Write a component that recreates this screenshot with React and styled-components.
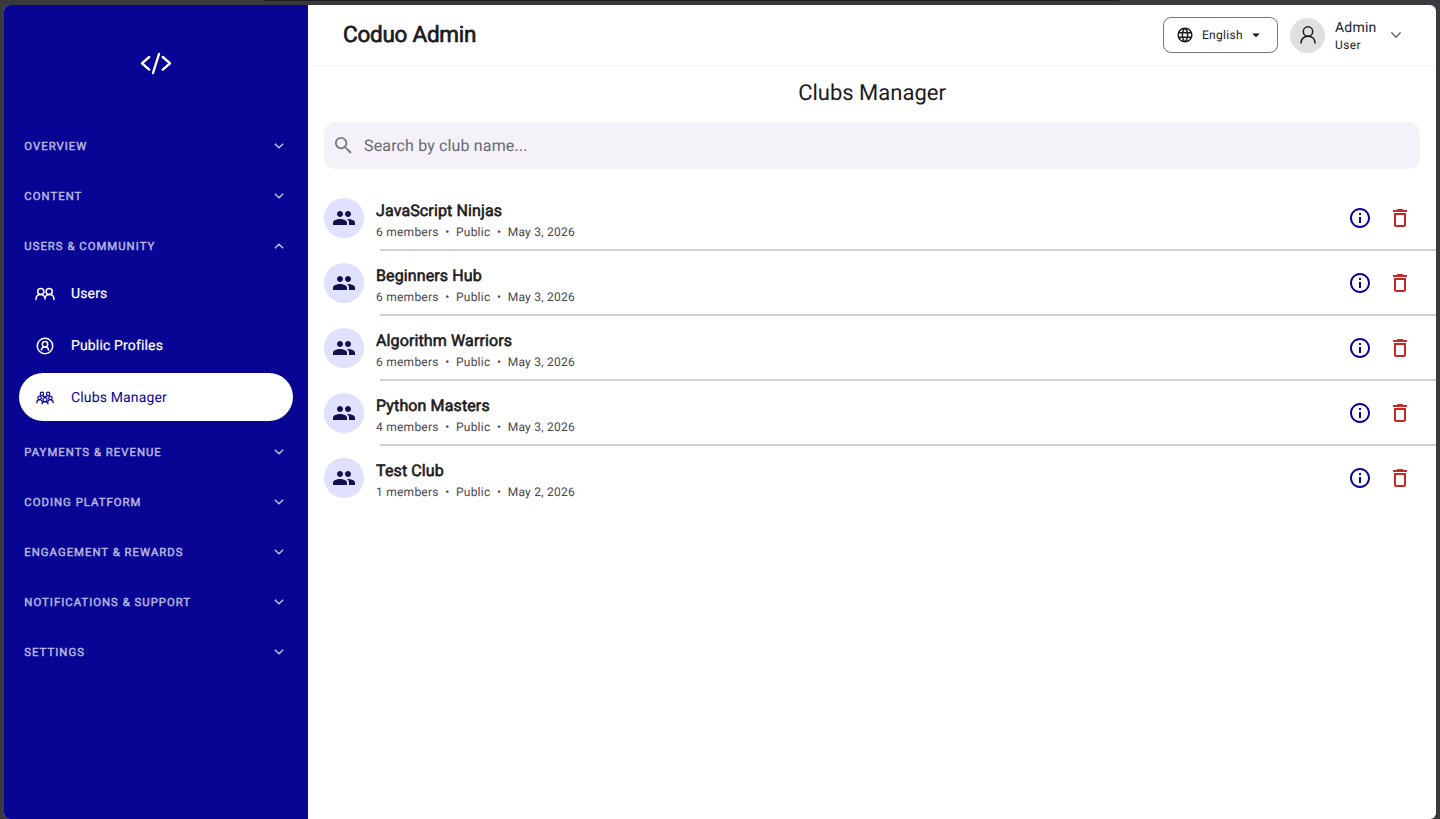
import { useState } from "react";
import styled, { createGlobalStyle } from "styled-components";
import { MdArrowDropDown, MdDeleteOutline, MdInfoOutline, MdLanguage, MdPeople, MdSearch } from "react-icons/md";

const GlobalStyle = createGlobalStyle`
  * {
    box-sizing: border-box;
  }
  body {
    margin: 0;
    background: #3a393d;
    font-family: Roboto, sans-serif;
    color: #1b1b1f;
    text-rendering: geometricPrecision;
  }
  button, input {
    font-family: inherit;
    text-rendering: inherit;
  }
`;

const TopEdge = styled.div`
  height: 5px;
  padding-left: 264px;

  &::before {
    content: "";
    display: block;
    width: 855px;
    height: 1px;
    background: #1f1e22;
  }
`;

const Frame = styled.div`
  display: flex;
  height: 814px;
  margin: 0 4px;
  border-radius: 6px;
  overflow: hidden;
  background: #fff;
`;

const Sidebar = styled.aside`
  width: 304px;
  flex-shrink: 0;
  background: #080595;
`;

const Logo = styled.div`
  display: flex;
  justify-content: center;
  align-items: center;
  height: 116px;
`;

const Group = styled.div`
  display: flex;
  align-items: center;
  justify-content: space-between;
  height: 50px;
  padding: 0 23px 0 20.3px;
  font-size: 11.3px;
  letter-spacing: 1.03px;
  -webkit-text-stroke: 0.45px #b9b8e4;
  color: #b9b8e4;
  white-space: nowrap;
  cursor: pointer;
`;

const GroupItems = styled.div`
  display: flex;
  flex-direction: column;
  gap: 4px;
  padding: 0 15px 6px;
  margin-top: -2px;
`;

const NavItem = styled.div`
  display: flex;
  align-items: center;
  gap: 16px;
  height: 48px;
  padding: 1px 0 0 16px;
  border-radius: 24px;
  font-size: 14px;
  letter-spacing: 0.15px;
  cursor: pointer;
  ${props => props.$active ? `
  background: #fff;
  color: #080595;
  ` : `
  color: #fff;
  -webkit-text-stroke: 0.2px #fff;
  `}
`;

const Main = styled.main`
  flex: 1;
  min-width: 0;
`;

const Header = styled.header`
  display: flex;
  align-items: center;
  height: 61px;
  padding: 0 34px 0 35px;
  border-bottom: 1px solid #f3f3f4;
`;

const Brand = styled.div`
  flex: 1;
  font-size: 22.5px;
  line-height: 30px;
  letter-spacing: -0.25px;
  -webkit-text-stroke: 0.7px #1b1b1f;
`;

const LanguageButton = styled.button`
  display: flex;
  align-items: center;
  width: 115px;
  height: 36px;
  padding: 0 12px 0 12px;
  border: 1px solid #77767f;
  border-radius: 8px;
  background: #fff;
  color: #1b1b1f;
  font-size: 12px;
  letter-spacing: 0.3px;

  span {
    margin: 0 4px 0 8px;
  }
`;

const UserAvatar = styled.div`
  display: flex;
  align-items: center;
  justify-content: center;
  width: 35px;
  height: 35px;
  margin: 0 10px 0 12px;
  border-radius: 50%;
  background: #e0e0e0;
`;

const UserName = styled.div`
  width: 55px;
  padding-top: 3px;
  font-size: 14px;
  line-height: 18px;
  letter-spacing: 0.2px;
`;

const UserRole = styled.div`
  font-size: 12px;
  line-height: 17px;
  letter-spacing: 0.35px;
`;

const PageTitle = styled.h1`
  margin: 0;
  padding: 13px 0 13px;
  font-size: 22px;
  font-weight: 400;
  line-height: 30px;
  text-align: center;
`;

const SearchBar = styled.label`
  display: flex;
  align-items: center;
  gap: 9px;
  height: 47px;
  margin: 0 16px;
  padding: 0 8px;
  border-radius: 12px;
  background: #f4f1f9;
  color: #7c7a82;
`;

const SearchInput = styled.input`
  flex: 1;
  padding: 0;
  border: 0;
  outline: 0;
  background: transparent;
  font-size: 16px;
  letter-spacing: 0.15px;

  &::placeholder {
    color: #69676f;
    opacity: 1;
  }
`;

const ClubList = styled.div`
  padding-top: 17px;
`;

const ClubRow = styled.div`
  display: flex;
  align-items: center;
  height: 65px;
  padding: 0 24px 2px 16px;
  background: ${props => props.$last ? "none" : "linear-gradient(#d1d1d3, #d1d1d3) 72px 100% / 100% 2px no-repeat"};
`;

const ClubAvatar = styled.div`
  display: flex;
  align-items: center;
  justify-content: center;
  width: 40px;
  height: 40px;
  margin-right: 12px;
  border-radius: 50%;
  background: #e0e0ff;
  color: #11104d;
`;

const ClubText = styled.div`
  flex: 1;
  padding-top: 4px;
`;

const ClubName = styled.div`
  font-size: 16px;
  letter-spacing: 0.12px;
  line-height: 24px;
  -webkit-text-stroke: 0.6px #1b1b1f;
`;

const ClubMeta = styled.div`
  font-size: 12px;
  line-height: 18px;
  letter-spacing: 0.25px;
  color: #47464f;
  white-space: pre;
`;

const IconButton = styled.button`
  display: flex;
  padding: 0;
  margin-left: 16px;
  border: 0;
  background: none;
  color: ${props => props.$color};
  cursor: pointer;
`;

const Stroke = styled.svg`
  flex-shrink: 0;
  fill: none;
  stroke: currentColor;
  stroke-width: ${props => props.$weight || 1.5};
  stroke-linecap: round;
  stroke-linejoin: round;
`;

function Chevron({ up }) {
  return (
    <Stroke width="12" height="12" viewBox="0 0 12 12" $weight={1.6}>
      <path d={up ? "M2.3 7.8L6 4.2l3.7 3.6" : "M2.3 4.2L6 7.8l3.7-3.6"} />
    </Stroke>
  );
}

function CodeLogo() {
  return (
    <Stroke width="34" height="24" viewBox="0 0 34 24" color="#fff" $weight={2.4}>
      <path d="M10.2 6L3 12.3l7.2 6.3M23.8 6l7.2 6.3-7.2 6.3M20 3l-6 19" />
    </Stroke>
  );
}

function UsersIcon() {
  return (
    <Stroke width="20" height="20" viewBox="0 0 20 20" $weight={1.5}>
      <circle cx="5.8" cy="7.5" r="3.1" />
      <circle cx="14.2" cy="7.5" r="3.1" />
      <path d="M1 15.5c0-3 2-4.9 4.6-4.9S10 12.5 10 15c0-2.5 1.8-4.4 4.4-4.4S19 12.5 19 15.5" />
    </Stroke>
  );
}

function ProfileIcon() {
  return (
    <Stroke width="20" height="20" viewBox="0 0 20 20" $weight={1.5}>
      <circle cx="10" cy="10" r="7.7" />
      <circle cx="10" cy="8.2" r="2.7" />
      <path d="M6.4 14c.2-2 1.5-3 3.6-3s3.4 1 3.6 3" />
    </Stroke>
  );
}

function ClubsIcon() {
  return (
    <Stroke width="20" height="20" viewBox="0 0 20 20" $weight={1.2}>
      <circle cx="6.9" cy="5.8" r="1.7" />
      <circle cx="13.1" cy="5.8" r="1.7" />
      <circle cx="4.6" cy="9.9" r="1.7" />
      <circle cx="15.4" cy="9.9" r="1.7" />
      <circle cx="10" cy="11.7" r="2" />
      <path d="M1.8 14.8c0-2 1.1-3.2 2.8-3.2 1.3 0 2.3.8 2.5 2M18.2 14.8c0-2-1.1-3.2-2.8-3.2-1.3 0-2.3.8-2.5 2M7 16c0-1.5 1.2-2.4 3-2.4s3 .9 3 2.4M7.5 7.8c1.3.1 2 .8 2.5 1.8.5-1 1.2-1.7 2.5-1.8" />
    </Stroke>
  );
}

const groups = [
  { label: "OVERVIEW" },
  { label: "CONTENT" },
  {
    label: "USERS & COMMUNITY",
    items: [
      { label: "Users", icon: <UsersIcon /> },
      { label: "Public Profiles", icon: <ProfileIcon /> },
      { label: "Clubs Manager", icon: <ClubsIcon /> },
    ],
  },
  { label: "PAYMENTS & REVENUE" },
  { label: "CODING PLATFORM" },
  { label: "ENGAGEMENT & REWARDS" },
  { label: "NOTIFICATIONS & SUPPORT" },
  { label: "SETTINGS" },
];

const clubs = [
  { name: "JavaScript Ninjas", members: 6, date: "May 3, 2026" },
  { name: "Beginners Hub", members: 6, date: "May 3, 2026" },
  { name: "Algorithm Warriors", members: 6, date: "May 3, 2026" },
  { name: "Python Masters", members: 4, date: "May 3, 2026" },
  { name: "Test Club", members: 1, date: "May 2, 2026" },
];

export default function App() {
  const [openGroup, setOpenGroup] = useState("USERS & COMMUNITY");
  const [activeItem, setActiveItem] = useState("Clubs Manager");
  const [search, setSearch] = useState("");
  const shown = clubs.filter((club) => club.name.toLowerCase().includes(search.toLowerCase()));

  return (
    <>
      <GlobalStyle />
      <TopEdge />
      <Frame>
        <Sidebar>
          <Logo>
            <CodeLogo />
          </Logo>
          {groups.map((group) => (
            <div key={group.label}>
              <Group onClick={() => setOpenGroup(openGroup === group.label ? null : group.label)}>
                {group.label}
                <Chevron up={openGroup === group.label} />
              </Group>
              {group.items && openGroup === group.label && (
                <GroupItems>
                  {group.items.map((item) => (
                    <NavItem
                      key={item.label}
                      $active={item.label === activeItem}
                      onClick={() => setActiveItem(item.label)}
                    >
                      {item.icon}
                      {item.label}
                    </NavItem>
                  ))}
                </GroupItems>
              )}
            </div>
          ))}
        </Sidebar>
        <Main>
          <Header>
            <Brand>Coduo Admin</Brand>
            <LanguageButton>
              <MdLanguage size={18} />
              <span>English</span>
              <MdArrowDropDown size={18} />
            </LanguageButton>
            <UserAvatar>
              <Stroke width="20" height="20" viewBox="0 0 20 20" $weight={1.5}>
                <circle cx="10" cy="6.5" r="4.7" />
                <path d="M3 18c0-4 2.8-6.8 7-6.8s7 2.8 7 6.8" />
              </Stroke>
            </UserAvatar>
            <UserName>
              Admin
              <UserRole>User</UserRole>
            </UserName>
            <Stroke width="12" height="12" viewBox="0 0 12 12" color="#66656c" $weight={1.4}>
              <path d="M1.8 3.8L6 8.2l4.2-4.4" />
            </Stroke>
          </Header>
          <PageTitle>Clubs Manager</PageTitle>
          <SearchBar>
            <MdSearch size={23} />
            <SearchInput
              value={search}
              placeholder="Search by club name..."
              onChange={(ev) => setSearch(ev.target.value)}
            />
          </SearchBar>
          <ClubList>
            {shown.map((club, index) => (
              <ClubRow key={club.name} $last={index === shown.length - 1}>
                <ClubAvatar>
                  <MdPeople size={24} />
                </ClubAvatar>
                <ClubText>
                  <ClubName>{club.name}</ClubName>
                  <ClubMeta>{`${club.members} members  •  Public  •  ${club.date}`}</ClubMeta>
                </ClubText>
                <IconButton $color="#080595">
                  <MdInfoOutline size={24} />
                </IconButton>
                <IconButton $color="#c62828">
                  <MdDeleteOutline size={24} />
                </IconButton>
              </ClubRow>
            ))}
          </ClubList>
        </Main>
      </Frame>
    </>
  );
}
